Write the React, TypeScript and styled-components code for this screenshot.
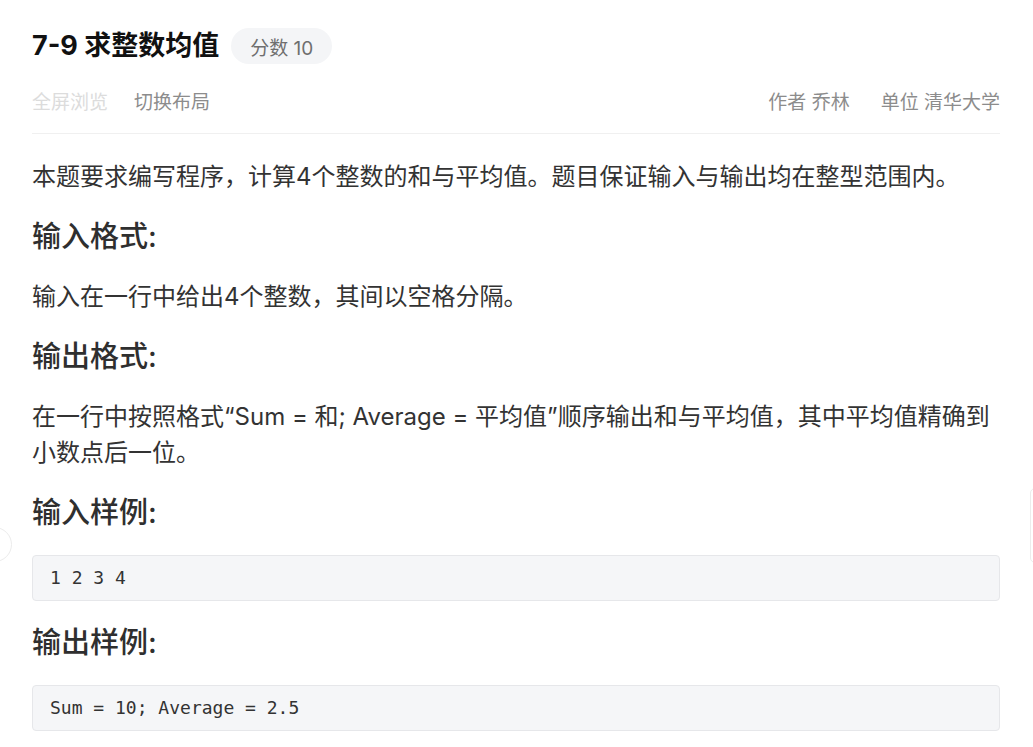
import React from "react";
import styled, { createGlobalStyle } from "styled-components";

const Global = createGlobalStyle`
  html, body { margin: 0; padding: 0; background: #fff; }
  body {
    font-family: Inter, "Noto Sans CJK SC", "Noto Sans", sans-serif;
    color: #333;
    overflow: hidden;
  }
  * { box-sizing: border-box; }
`;

const Page = styled.div`
  position: relative;
  width: 1033px;
  height: 747px;
  padding: 28px 33px 0 32px;
  overflow: hidden;
`;

const TitleRow = styled.div`
  display: flex;
  align-items: center;
  gap: 12px;
  height: 36px;
`;

const Title = styled.h1`
  margin: 0;
  font-size: 27px;
  font-weight: 700;
  color: #111;
  line-height: 36px;
`;

const Badge = styled.span`
  display: inline-flex;
  align-items: center;
  height: 36px;
  padding: 0 19px;
  border-radius: 18px;
  background: #f4f5f7;
  color: #6f6f6f;
  font-size: 19px;
`;

const Toolbar = styled.div`
  display: flex;
  align-items: center;
  justify-content: space-between;
  margin-top: 19px;
  height: 51px;
  padding-bottom: 10px;
  border-bottom: 1px solid #f0f0f0;
`;

const ToolGroup = styled.div<{ $gap: number }>`
  display: flex;
  align-items: center;
  gap: ${(p) => p.$gap}px;
`;

const ToolItem = styled.span<{ $disabled?: boolean }>`
  font-size: 19px;
  line-height: 40px;
  color: ${(p) => (p.$disabled ? "#dcdcdc" : "#8c8c8c")};
`;

const Content = styled.div`
  padding-top: 25px;
`;

const Para = styled.p`
  margin: 0;
  font-size: 24px;
  line-height: 36px;
  color: #333;
`;

const Heading = styled.h3`
  margin: 22px 0;
  font-size: 29px;
  line-height: 40px;
  font-weight: 500;
  color: #2f2f2f;
`;

const Code = styled.pre`
  margin: 0;
  padding: 12px 17px;
  background: #f5f6f8;
  border: 1px solid #e6e7ea;
  border-radius: 4px;
  font-family: "DejaVu Sans Mono", "Liberation Mono", monospace;
  font-size: 18px;
  line-height: 20px;
  color: #333;
`;

const LeftHandle = styled.div`
  position: absolute;
  left: -23px;
  top: 527px;
  width: 35px;
  height: 35px;
  border-radius: 50%;
  border: 1px solid #ececec;
  background: #fff;
`;

const RightHandle = styled.div`
  position: absolute;
  left: 1030px;
  top: 488px;
  width: 40px;
  height: 75px;
  border-radius: 5px;
  border: 1px solid #ececec;
  background: #fff;
`;

export default function App() {
  return (
    <>
      <Global />
      <Page>
        <TitleRow>
          <Title>7-9 求整数均值</Title>
          <Badge>分数 10</Badge>
        </TitleRow>
        <Toolbar>
          <ToolGroup $gap={26}>
            <ToolItem $disabled>全屏浏览</ToolItem>
            <ToolItem>切换布局</ToolItem>
          </ToolGroup>
          <ToolGroup $gap={31}>
            <ToolItem>作者 乔林</ToolItem>
            <ToolItem>单位 清华大学</ToolItem>
          </ToolGroup>
        </Toolbar>
        <Content>
          <Para>本题要求编写程序，计算4个整数的和与平均值。题目保证输入与输出均在整型范围内。</Para>
          <Heading>输入格式:</Heading>
          <Para>输入在一行中给出4个整数，其间以空格分隔。</Para>
          <Heading>输出格式:</Heading>
          <Para>在一行中按照格式“Sum = 和; Average = 平均值”顺序输出和与平均值，其中平均值精确到小数点后一位。</Para>
          <Heading>输入样例:</Heading>
          <Code>1 2 3 4</Code>
          <Heading>输出样例:</Heading>
          <Code>Sum = 10; Average = 2.5</Code>
        </Content>
        <LeftHandle />
        <RightHandle />
      </Page>
    </>
  );
}
